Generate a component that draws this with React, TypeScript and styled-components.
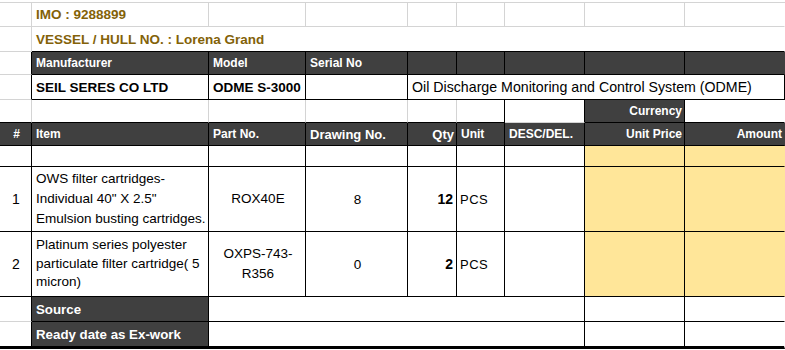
import React from "react";
import styled, { createGlobalStyle } from "styled-components";

const GRID = "#d4d4d4";
const INK = "#000";
const DARK = "#404040";
const FILL = "#ffe699";
const GOLD = "#836208";

const GlobalStyle = createGlobalStyle`
  html, body {
    margin: 0;
    padding: 0;
    background: #fff;
  }
  body {
    font-family: "Liberation Sans", Arial, sans-serif;
  }
`;

type Edge = "k" | "g" | "n" | "thick";

const edge = (e: Edge = "k") => {
  switch (e) {
    case "g":
      return `1px solid ${GRID}`;
    case "n":
      return "1px solid transparent";
    case "thick":
      return `3px solid ${INK}`;
    default:
      return `1px solid ${INK}`;
  }
};

const Sheet = styled.div`
  display: grid;
  grid-template-columns: 32px 177px 97px 102px 49px 48px 80px 100px 100px;
  grid-template-rows: 24px 25px 23px 25px 23px 23px 21px 65px 65px 25px 27px;
  width: 785px;
  margin-top: 2px;
  border-top: 1px solid ${GRID};
`;

interface CellProps {
  $span?: number;
  $align?: "left" | "center" | "right";
  $r?: Edge;
  $b?: Edge;
}

const Cell = styled.div<CellProps>`
  grid-column: span ${(p) => p.$span ?? 1};
  box-sizing: border-box;
  min-width: 0;
  display: flex;
  align-items: center;
  justify-content: ${(p) =>
    p.$align === "center" ? "center" : p.$align === "right" ? "flex-end" : "flex-start"};
  text-align: ${(p) => p.$align ?? "left"};
  padding: 0 2px 0 4px;
  border-right: ${(p) => edge(p.$r)};
  border-bottom: ${(p) => edge(p.$b)};
  white-space: nowrap;
  font-size: 13.5px;
  color: #000;
  background: #fff;
`;

// plain sheet cell, only the light gridlines
const GridCell = styled(Cell).attrs<CellProps>((p) => ({
  $r: p.$r ?? "g",
  $b: p.$b ?? "g",
}))``;

const Title = styled(GridCell)`
  color: ${GOLD};
  font-weight: bold;
`;

const Head = styled(Cell)<{ $size?: number }>`
  background: ${DARK};
  color: #fff;
  font-weight: bold;
  font-size: ${(p) => p.$size ?? 12}px;
`;

const Strong = styled(Cell)`
  font-weight: bold;
`;

const Wide = styled(Cell)`
  font-size: 14.2px;
`;

const Fill = styled(Cell)`
  background: ${FILL};
`;

const Num = styled(Cell)`
  font-size: 14px;
  padding-left: 3px;
`;

const Qty = styled(Cell)`
  font-weight: bold;
  font-size: 14px;
  padding-right: 3px;
`;

const Unit = styled(Cell)`
  font-size: 13px;
  letter-spacing: 0.5px;
  padding-left: 3px;
`;

const Lines = styled.span<{ $lh: number }>`
  display: block;
  line-height: ${(p) => p.$lh}px;
`;

const items = [
  {
    no: "1",
    name: ["OWS filter cartridges-", "Individual 40\" X 2.5\"", "Emulsion busting cartridges."],
    part: ["ROX40E"],
    drawing: "8",
    qty: "12",
    lh: 20,
  },
  {
    no: "2",
    name: ["Platinum series polyester", "particulate filter cartridge( 5", "micron)"],
    part: ["OXPS-743-", "R356"],
    drawing: "0",
    qty: "2",
    lh: 18.5,
  },
];

const withBreaks = (lines: string[]) =>
  lines.map((l, i) => (
    <React.Fragment key={i}>
      {i > 0 && <br />}
      {l}
    </React.Fragment>
  ));

const App = () => {
  return (
    <>
      <GlobalStyle />
      <Sheet>
        {/* ship */}
        <GridCell />
        <Title>IMO : 9288899</Title>
        <GridCell />
        <GridCell />
        <GridCell />
        <GridCell />
        <GridCell />
        <GridCell />
        <GridCell $r="n" />

        <GridCell />
        <Title $span={8} $r="n" $b="k">
          VESSEL / HULL NO. : Lorena Grand
        </Title>

        {/* equipment */}
        <GridCell $r="k" />
        <Head>Manufacturer</Head>
        <Head>Model</Head>
        <Head>Serial No</Head>
        <Head />
        <Head />
        <Head />
        <Head />
        <Head $r="n" />

        <GridCell $r="k" />
        <Strong>SEIL SERES CO LTD</Strong>
        <Strong>ODME S-3000</Strong>
        <Cell />
        <Wide $span={5}>Oil Discharge Monitoring and Control System (ODME)</Wide>

        <GridCell $b="k" />
        <GridCell $b="k" />
        <GridCell $b="k" />
        <GridCell $b="k" />
        <GridCell $b="k" />
        <GridCell $r="k" $b="k" />
        <GridCell $r="k" />
        <Head $align="right">Currency</Head>
        <Cell $r="n" />

        {/* items */}
        <Head $align="center">#</Head>
        <Head>Item</Head>
        <Head>Part No.</Head>
        <Head $size={13}>Drawing No.</Head>
        <Head $align="right" $size={13}>
          Qty
        </Head>
        <Head>Unit</Head>
        <Head>DESC/DEL.</Head>
        <Head $align="right">Unit Price</Head>
        <Head $align="right" $r="n">
          Amount
        </Head>

        <Cell />
        <Cell />
        <Cell />
        <Cell />
        <Cell />
        <Cell />
        <Cell />
        <Fill />
        <Fill $r="n" />

        {items.map((it) => (
          <React.Fragment key={it.no}>
            <Num $align="center">{it.no}</Num>
            <Cell>
              <Lines $lh={it.lh}>{withBreaks(it.name)}</Lines>
            </Cell>
            <Cell $align="center">
              <Lines $lh={20}>{withBreaks(it.part)}</Lines>
            </Cell>
            <Cell $align="center">{it.drawing}</Cell>
            <Qty $align="right">{it.qty}</Qty>
            <Unit>PCS</Unit>
            <Cell />
            <Fill />
            <Fill $r="n" />
          </React.Fragment>
        ))}

        {/* footer */}
        <GridCell $r="k" />
        <Head $size={13.3}>Source</Head>
        <Cell $span={5} />
        <Cell />
        <Cell $r="n" />

        <GridCell $r="k" $b="thick" />
        <Head $size={13.3} $b="thick">
          Ready date as Ex-work
        </Head>
        <Cell $span={5} $b="thick" />
        <Cell $b="thick" />
        <Cell $r="n" $b="thick" />
      </Sheet>
    </>
  );
};

export default App;
